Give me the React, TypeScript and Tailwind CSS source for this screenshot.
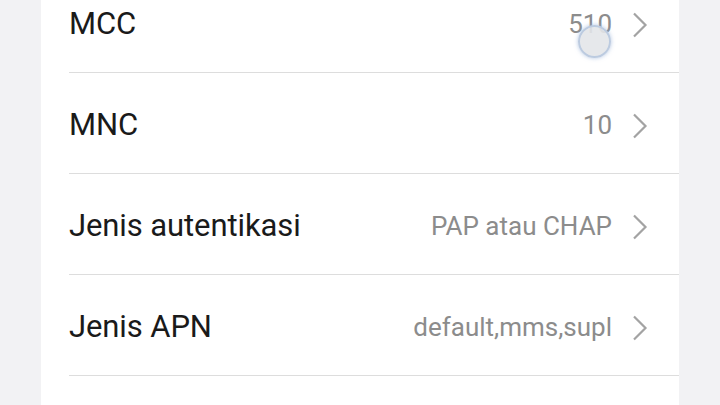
const rows = [
  { label: "MCC", value: "510" },
  { label: "MNC", value: "10" },
  { label: "Jenis autentikasi", value: "PAP atau CHAP" },
  { label: "Jenis APN", value: "default,mms,supl" },
];

function Chevron() {
  return (
    <svg width="16" height="26" viewBox="0 0 16 26" className="shrink-0">
      <path d="M2 1.5 L13.5 13 L2 24.5" fill="none" stroke="#a3a3a3" strokeWidth="2.2" />
    </svg>
  );
}

export default function App() {
  return (
    <div
      className="w-[720px] h-[405px] overflow-hidden bg-[#f2f2f4] flex justify-center"
      style={{ fontFamily: "Roboto, 'Noto Sans', sans-serif" }}
    >
      <div className="relative w-[638px] bg-white">
        <div className="-mt-[28px] flex flex-col">
          {rows.map((r) => (
            <div key={r.label} className="ml-[28px] h-[101px] pt-[5px] flex items-center border-b border-[#dddddd] pr-[31px]">
              <div className="flex-1 text-[31px] text-[#1a1a1a] tracking-[-0.1px]">{r.label}</div>
              <div className="text-[26px] text-[#8c8c8c] mr-[20px]">{r.value}</div>
              <Chevron />
            </div>
          ))}
        </div>
        <div className="absolute left-[537px] top-[25px] w-[33px] h-[33px] rounded-full bg-[#e3e5e9]/90 border-2 border-[#bccbe0] shadow-[0_0_4px_rgba(150,175,215,0.7)]" />
      </div>
    </div>
  );
}
